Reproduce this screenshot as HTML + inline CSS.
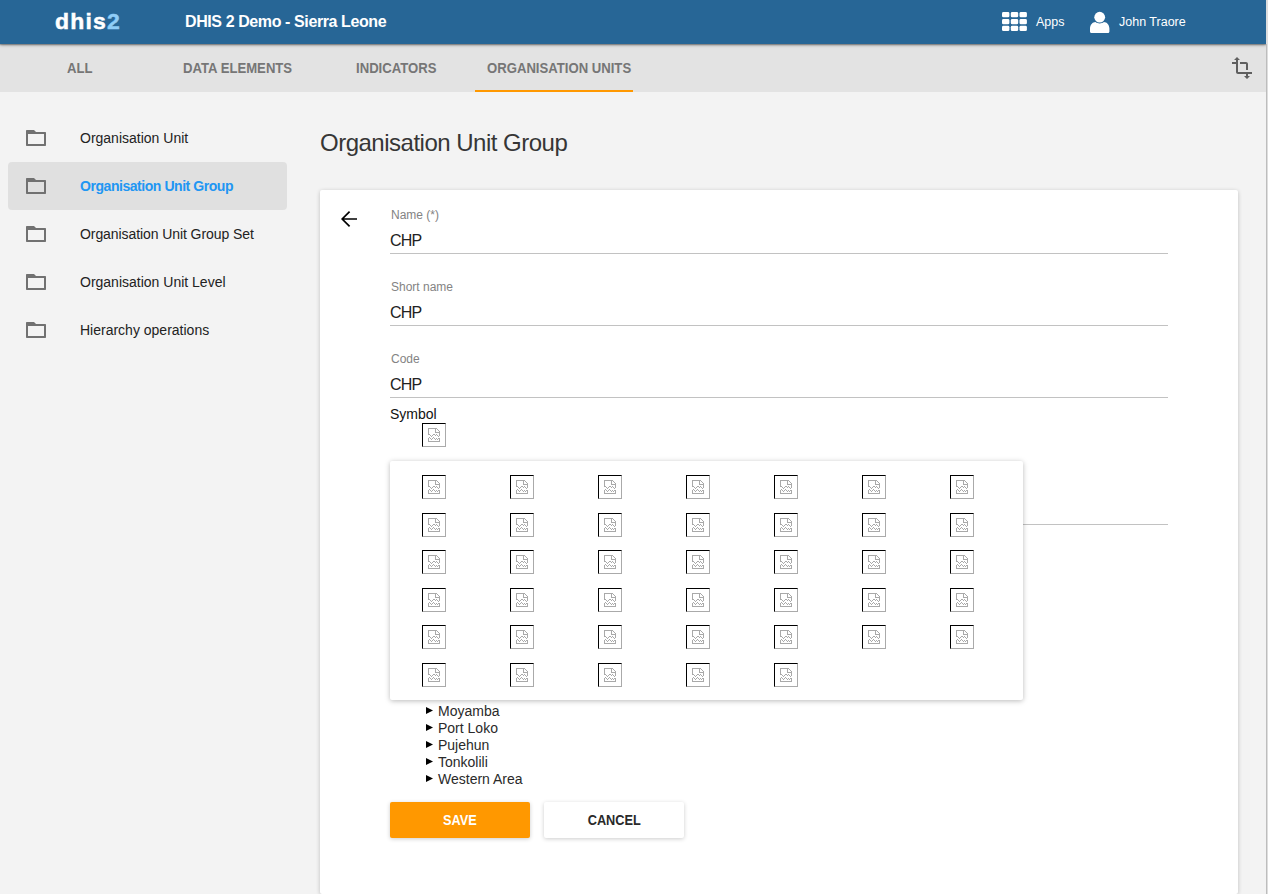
<!DOCTYPE html>
<html><head><meta charset="utf-8">
<style>
*{box-sizing:border-box;margin:0;padding:0}
html,body{width:1268px;height:894px;overflow:hidden;background:#f3f3f3;font-family:"Liberation Sans",sans-serif;position:relative}
.abs{position:absolute;white-space:nowrap}
#hdr{position:absolute;left:0;top:0;width:1266px;height:44px;background:#276696;box-shadow:0 1px 3px rgba(0,0,0,.4),0 1px 1px rgba(0,0,0,.2);z-index:5}
#tabs{position:absolute;left:0;top:44px;width:1266px;height:48px;background:#e3e3e3}
#rstrip{position:absolute;left:1266px;top:0;width:2px;height:894px;background:#dedede;z-index:6}
#rstrip:before{content:"";position:absolute;left:0;top:44px;width:1px;height:850px;background:#bdbdbd}
.tab{position:absolute;top:16px;font-size:15px;font-weight:bold;color:#767676;line-height:16px;transform:scaleX(0.875);transform-origin:0 0}
.side{position:absolute;left:80px;font-size:14px;color:#222;line-height:16px;white-space:nowrap}
.fold{position:absolute;left:24px;width:24px;height:24px}
.card{position:absolute;left:320px;top:190px;width:918px;height:704px;background:#fff;box-shadow:0 1px 4px rgba(0,0,0,.22);border-radius:2px}
.lbl{position:absolute;left:391px;font-size:12px;color:#838383;line-height:14px}
.val{position:absolute;left:390px;font-size:16px;color:#222;line-height:18px;letter-spacing:-0.8px}
.uline{position:absolute;left:390px;width:778px;height:1px;background:#c2c2c2}
.bi{position:absolute;width:24px;height:24px;border-top:1px solid #000;border-left:1px solid #000;border-right:1px solid #aaa;border-bottom:1px solid #aaa}
.bi svg{position:absolute;left:3px;top:2px;width:16px;height:18px}
.pop{position:absolute;left:390px;top:461px;width:633px;height:239px;background:#fff;border-radius:2px;box-shadow:0 1px 6px rgba(0,0,0,.16),0 1px 4px rgba(0,0,0,.12)}
.tree{position:absolute;left:438px;font-size:14px;color:#2a2a2a;line-height:17px}
.tri{position:absolute;left:426px;width:0;height:0;border-top:3.5px solid transparent;border-bottom:3.5px solid transparent;border-left:7.5px solid #000}
.btn{position:absolute;top:802px;width:140px;height:36px;border-radius:2px;font-size:14px;font-weight:bold;text-align:center;line-height:36px}.btn span{display:inline-block;transform:scaleX(0.85);font-size:15px}
</style></head><body>
<div id="hdr">
 <div class="abs" style="left:55px;top:7px;font-size:23px;font-weight:bold;color:#fff;line-height:30px;letter-spacing:1.2px;-webkit-text-stroke:0.5px currentColor;transform:scaleY(0.95);transform-origin:0 0">dhis<span style="color:#8fcdf7">2</span></div>
 <div class="abs" style="left:185px;top:13px;font-size:16px;font-weight:bold;color:#fff;line-height:18px;letter-spacing:-0.4px">DHIS 2 Demo - Sierra Leone</div>
 <svg class="abs" style="left:1001px;top:11px" width="27" height="22" viewBox="0 0 27 22">
  <g fill="#fff">
   <rect x="1" y="1" width="7.4" height="5.3" rx="1.4"/><rect x="9.8" y="1" width="7.4" height="5.3" rx="1.4"/><rect x="18.5" y="1" width="7.4" height="5.3" rx="1.4"/>
   <rect x="1" y="8" width="7.4" height="5.3" rx="1.4"/><rect x="9.8" y="8" width="7.4" height="5.3" rx="1.4"/><rect x="18.5" y="8" width="7.4" height="5.3" rx="1.4"/>
   <rect x="1" y="14.8" width="7.4" height="5.3" rx="1.4"/><rect x="9.8" y="14.8" width="7.4" height="5.3" rx="1.4"/><rect x="18.5" y="14.8" width="7.4" height="5.3" rx="1.4"/>
  </g>
 </svg>
 <div class="abs" style="left:1036px;top:15px;font-size:12.5px;color:#fff;line-height:14px">Apps</div>
 <svg class="abs" style="left:1089px;top:11px" width="22" height="23" viewBox="0 0 22 23">
  <g fill="#fff"><circle cx="10.7" cy="6.2" r="5.4"/><path d="M2.5 22C1.5 22 1 21.4 1 20.5v-3c0-3.6 2.6-6.5 5.5-6.5 1.2 1 2.6 1.4 4.2 1.4s3-.4 4.2-1.4c2.9 0 5.5 2.9 5.5 6.5v3c0 .9-.5 1.5-1.5 1.5z"/></g>
 </svg>
 <div class="abs" style="left:1119px;top:15px;font-size:12.5px;color:#fff;line-height:14px">John Traore</div>
</div>
<div id="tabs">
 <div class="tab" style="left:67px">ALL</div>
 <div class="tab" style="left:183px">DATA ELEMENTS</div>
 <div class="tab" style="left:356px">INDICATORS</div>
 <div class="tab" style="left:487px">ORGANISATION UNITS</div>
 <div style="position:absolute;left:475px;top:46px;width:158px;height:2px;background:#ff9800"></div>
 <svg class="abs" style="left:1230px;top:12px" width="24" height="24" viewBox="0 0 24 24"><path fill="#5f5f5f" d="M22 18v-2H8V4h2L7 1 4 4h2v2H2v2h4v8c0 1.1.9 2 2 2h8v2h-2l3 3 3-3h-2v-2h4zM10 8h6v6h2V8c0-1.1-.9-2-2-2h-6v2z"/></svg>
</div>
<div id="rstrip"></div>

<div style="position:absolute;left:8px;top:162px;width:279px;height:48px;background:#e0e0e0;border-radius:4px"></div>
<svg class="fold" style="top:126px" viewBox="0 0 24 24"><path fill="#717171" fill-rule="evenodd" d="M2 4.7Q2 4 2.7 4H10L12 6H21.3Q22 6 22 6.7V19.3Q22 20 21.3 20H2.7Q2 20 2 19.3ZM4 8V18H20V8Z"/></svg>
<svg class="fold" style="top:174px" viewBox="0 0 24 24"><path fill="#717171" fill-rule="evenodd" d="M2 4.7Q2 4 2.7 4H10L12 6H21.3Q22 6 22 6.7V19.3Q22 20 21.3 20H2.7Q2 20 2 19.3ZM4 8V18H20V8Z"/></svg>
<svg class="fold" style="top:222px" viewBox="0 0 24 24"><path fill="#717171" fill-rule="evenodd" d="M2 4.7Q2 4 2.7 4H10L12 6H21.3Q22 6 22 6.7V19.3Q22 20 21.3 20H2.7Q2 20 2 19.3ZM4 8V18H20V8Z"/></svg>
<svg class="fold" style="top:270px" viewBox="0 0 24 24"><path fill="#717171" fill-rule="evenodd" d="M2 4.7Q2 4 2.7 4H10L12 6H21.3Q22 6 22 6.7V19.3Q22 20 21.3 20H2.7Q2 20 2 19.3ZM4 8V18H20V8Z"/></svg>
<svg class="fold" style="top:318px" viewBox="0 0 24 24"><path fill="#717171" fill-rule="evenodd" d="M2 4.7Q2 4 2.7 4H10L12 6H21.3Q22 6 22 6.7V19.3Q22 20 21.3 20H2.7Q2 20 2 19.3ZM4 8V18H20V8Z"/></svg>
<div class="side" style="top:130px">Organisation Unit</div>
<div class="side" style="top:178px;color:#2196f3;font-weight:bold;letter-spacing:-0.45px">Organisation Unit Group</div>
<div class="side" style="top:226px;letter-spacing:-0.08px">Organisation Unit Group Set</div>
<div class="side" style="top:274px">Organisation Unit Level</div>
<div class="side" style="top:322px">Hierarchy operations</div>

<div class="abs" style="left:320px;top:129px;font-size:24px;color:#363636;line-height:28px;letter-spacing:-0.5px">Organisation Unit Group</div>

<div class="card"></div>
<svg class="abs" style="left:337px;top:207px" width="24" height="24" viewBox="0 0 24 24"><path fill="none" stroke="#000" stroke-width="1.7" d="M20 12H5.4M12.6 4.6L5.2 12l7.4 7.4"/></svg>

<div class="lbl" style="top:208px">Name (*)</div>
<div class="val" style="top:232px">CHP</div>
<div class="uline" style="top:253px"></div>
<div class="lbl" style="top:280px">Short name</div>
<div class="val" style="top:304px">CHP</div>
<div class="uline" style="top:325px"></div>
<div class="lbl" style="top:352px">Code</div>
<div class="val" style="top:376px">CHP</div>
<div class="uline" style="top:397px"></div>
<div class="abs" style="left:390px;top:406px;font-size:14px;color:#111;line-height:16px">Symbol</div>
<div class="bi" style="left:422px;top:423px"><svg viewBox="0 0 16 18" shape-rendering="crispEdges"><path fill="#a9a9a9" d="M2 2h9v1h-9zM2 3h1v1h-1zM9 3h1v1h-1zM11 3h1v1h-1zM2 4h1v1h-1zM9 4h1v1h-1zM12 4h1v1h-1zM2 5h1v1h-1zM9 5h1v1h-1zM13 5h1v1h-1zM2 6h1v1h-1zM9 6h5v1h-5zM2 7h1v1h-1zM13 7h1v1h-1zM2 8h2v1h-2zM7 8h2v1h-2zM10 8h1v1h-1zM13 8h1v1h-1zM4 9h1v1h-1zM6 9h1v1h-1zM9 9h1v1h-1zM11 9h1v1h-1zM13 9h1v1h-1zM5 10h1v1h-1zM12 10h1v1h-1zM3 11h1v1h-1zM7 11h1v1h-1zM2 12h1v1h-1zM4 12h1v1h-1zM6 12h1v1h-1zM8 12h1v1h-1zM10 12h1v1h-1zM12 12h2v1h-2zM2 13h1v1h-1zM5 13h1v1h-1zM9 13h1v1h-1zM11 13h1v1h-1zM13 13h1v1h-1zM2 14h1v1h-1zM13 14h1v1h-1zM2 15h12v1h-12z"/></svg></div>
<div class="uline" style="top:524px"></div>

<div class="pop"><div class="bi" style="left:32px;top:14px"><svg viewBox="0 0 16 18" shape-rendering="crispEdges"><path fill="#a9a9a9" d="M2 2h9v1h-9zM2 3h1v1h-1zM9 3h1v1h-1zM11 3h1v1h-1zM2 4h1v1h-1zM9 4h1v1h-1zM12 4h1v1h-1zM2 5h1v1h-1zM9 5h1v1h-1zM13 5h1v1h-1zM2 6h1v1h-1zM9 6h5v1h-5zM2 7h1v1h-1zM13 7h1v1h-1zM2 8h2v1h-2zM7 8h2v1h-2zM10 8h1v1h-1zM13 8h1v1h-1zM4 9h1v1h-1zM6 9h1v1h-1zM9 9h1v1h-1zM11 9h1v1h-1zM13 9h1v1h-1zM5 10h1v1h-1zM12 10h1v1h-1zM3 11h1v1h-1zM7 11h1v1h-1zM2 12h1v1h-1zM4 12h1v1h-1zM6 12h1v1h-1zM8 12h1v1h-1zM10 12h1v1h-1zM12 12h2v1h-2zM2 13h1v1h-1zM5 13h1v1h-1zM9 13h1v1h-1zM11 13h1v1h-1zM13 13h1v1h-1zM2 14h1v1h-1zM13 14h1v1h-1zM2 15h12v1h-12z"/></svg></div><div class="bi" style="left:120px;top:14px"><svg viewBox="0 0 16 18" shape-rendering="crispEdges"><path fill="#a9a9a9" d="M2 2h9v1h-9zM2 3h1v1h-1zM9 3h1v1h-1zM11 3h1v1h-1zM2 4h1v1h-1zM9 4h1v1h-1zM12 4h1v1h-1zM2 5h1v1h-1zM9 5h1v1h-1zM13 5h1v1h-1zM2 6h1v1h-1zM9 6h5v1h-5zM2 7h1v1h-1zM13 7h1v1h-1zM2 8h2v1h-2zM7 8h2v1h-2zM10 8h1v1h-1zM13 8h1v1h-1zM4 9h1v1h-1zM6 9h1v1h-1zM9 9h1v1h-1zM11 9h1v1h-1zM13 9h1v1h-1zM5 10h1v1h-1zM12 10h1v1h-1zM3 11h1v1h-1zM7 11h1v1h-1zM2 12h1v1h-1zM4 12h1v1h-1zM6 12h1v1h-1zM8 12h1v1h-1zM10 12h1v1h-1zM12 12h2v1h-2zM2 13h1v1h-1zM5 13h1v1h-1zM9 13h1v1h-1zM11 13h1v1h-1zM13 13h1v1h-1zM2 14h1v1h-1zM13 14h1v1h-1zM2 15h12v1h-12z"/></svg></div><div class="bi" style="left:208px;top:14px"><svg viewBox="0 0 16 18" shape-rendering="crispEdges"><path fill="#a9a9a9" d="M2 2h9v1h-9zM2 3h1v1h-1zM9 3h1v1h-1zM11 3h1v1h-1zM2 4h1v1h-1zM9 4h1v1h-1zM12 4h1v1h-1zM2 5h1v1h-1zM9 5h1v1h-1zM13 5h1v1h-1zM2 6h1v1h-1zM9 6h5v1h-5zM2 7h1v1h-1zM13 7h1v1h-1zM2 8h2v1h-2zM7 8h2v1h-2zM10 8h1v1h-1zM13 8h1v1h-1zM4 9h1v1h-1zM6 9h1v1h-1zM9 9h1v1h-1zM11 9h1v1h-1zM13 9h1v1h-1zM5 10h1v1h-1zM12 10h1v1h-1zM3 11h1v1h-1zM7 11h1v1h-1zM2 12h1v1h-1zM4 12h1v1h-1zM6 12h1v1h-1zM8 12h1v1h-1zM10 12h1v1h-1zM12 12h2v1h-2zM2 13h1v1h-1zM5 13h1v1h-1zM9 13h1v1h-1zM11 13h1v1h-1zM13 13h1v1h-1zM2 14h1v1h-1zM13 14h1v1h-1zM2 15h12v1h-12z"/></svg></div><div class="bi" style="left:296px;top:14px"><svg viewBox="0 0 16 18" shape-rendering="crispEdges"><path fill="#a9a9a9" d="M2 2h9v1h-9zM2 3h1v1h-1zM9 3h1v1h-1zM11 3h1v1h-1zM2 4h1v1h-1zM9 4h1v1h-1zM12 4h1v1h-1zM2 5h1v1h-1zM9 5h1v1h-1zM13 5h1v1h-1zM2 6h1v1h-1zM9 6h5v1h-5zM2 7h1v1h-1zM13 7h1v1h-1zM2 8h2v1h-2zM7 8h2v1h-2zM10 8h1v1h-1zM13 8h1v1h-1zM4 9h1v1h-1zM6 9h1v1h-1zM9 9h1v1h-1zM11 9h1v1h-1zM13 9h1v1h-1zM5 10h1v1h-1zM12 10h1v1h-1zM3 11h1v1h-1zM7 11h1v1h-1zM2 12h1v1h-1zM4 12h1v1h-1zM6 12h1v1h-1zM8 12h1v1h-1zM10 12h1v1h-1zM12 12h2v1h-2zM2 13h1v1h-1zM5 13h1v1h-1zM9 13h1v1h-1zM11 13h1v1h-1zM13 13h1v1h-1zM2 14h1v1h-1zM13 14h1v1h-1zM2 15h12v1h-12z"/></svg></div><div class="bi" style="left:384px;top:14px"><svg viewBox="0 0 16 18" shape-rendering="crispEdges"><path fill="#a9a9a9" d="M2 2h9v1h-9zM2 3h1v1h-1zM9 3h1v1h-1zM11 3h1v1h-1zM2 4h1v1h-1zM9 4h1v1h-1zM12 4h1v1h-1zM2 5h1v1h-1zM9 5h1v1h-1zM13 5h1v1h-1zM2 6h1v1h-1zM9 6h5v1h-5zM2 7h1v1h-1zM13 7h1v1h-1zM2 8h2v1h-2zM7 8h2v1h-2zM10 8h1v1h-1zM13 8h1v1h-1zM4 9h1v1h-1zM6 9h1v1h-1zM9 9h1v1h-1zM11 9h1v1h-1zM13 9h1v1h-1zM5 10h1v1h-1zM12 10h1v1h-1zM3 11h1v1h-1zM7 11h1v1h-1zM2 12h1v1h-1zM4 12h1v1h-1zM6 12h1v1h-1zM8 12h1v1h-1zM10 12h1v1h-1zM12 12h2v1h-2zM2 13h1v1h-1zM5 13h1v1h-1zM9 13h1v1h-1zM11 13h1v1h-1zM13 13h1v1h-1zM2 14h1v1h-1zM13 14h1v1h-1zM2 15h12v1h-12z"/></svg></div><div class="bi" style="left:472px;top:14px"><svg viewBox="0 0 16 18" shape-rendering="crispEdges"><path fill="#a9a9a9" d="M2 2h9v1h-9zM2 3h1v1h-1zM9 3h1v1h-1zM11 3h1v1h-1zM2 4h1v1h-1zM9 4h1v1h-1zM12 4h1v1h-1zM2 5h1v1h-1zM9 5h1v1h-1zM13 5h1v1h-1zM2 6h1v1h-1zM9 6h5v1h-5zM2 7h1v1h-1zM13 7h1v1h-1zM2 8h2v1h-2zM7 8h2v1h-2zM10 8h1v1h-1zM13 8h1v1h-1zM4 9h1v1h-1zM6 9h1v1h-1zM9 9h1v1h-1zM11 9h1v1h-1zM13 9h1v1h-1zM5 10h1v1h-1zM12 10h1v1h-1zM3 11h1v1h-1zM7 11h1v1h-1zM2 12h1v1h-1zM4 12h1v1h-1zM6 12h1v1h-1zM8 12h1v1h-1zM10 12h1v1h-1zM12 12h2v1h-2zM2 13h1v1h-1zM5 13h1v1h-1zM9 13h1v1h-1zM11 13h1v1h-1zM13 13h1v1h-1zM2 14h1v1h-1zM13 14h1v1h-1zM2 15h12v1h-12z"/></svg></div><div class="bi" style="left:560px;top:14px"><svg viewBox="0 0 16 18" shape-rendering="crispEdges"><path fill="#a9a9a9" d="M2 2h9v1h-9zM2 3h1v1h-1zM9 3h1v1h-1zM11 3h1v1h-1zM2 4h1v1h-1zM9 4h1v1h-1zM12 4h1v1h-1zM2 5h1v1h-1zM9 5h1v1h-1zM13 5h1v1h-1zM2 6h1v1h-1zM9 6h5v1h-5zM2 7h1v1h-1zM13 7h1v1h-1zM2 8h2v1h-2zM7 8h2v1h-2zM10 8h1v1h-1zM13 8h1v1h-1zM4 9h1v1h-1zM6 9h1v1h-1zM9 9h1v1h-1zM11 9h1v1h-1zM13 9h1v1h-1zM5 10h1v1h-1zM12 10h1v1h-1zM3 11h1v1h-1zM7 11h1v1h-1zM2 12h1v1h-1zM4 12h1v1h-1zM6 12h1v1h-1zM8 12h1v1h-1zM10 12h1v1h-1zM12 12h2v1h-2zM2 13h1v1h-1zM5 13h1v1h-1zM9 13h1v1h-1zM11 13h1v1h-1zM13 13h1v1h-1zM2 14h1v1h-1zM13 14h1v1h-1zM2 15h12v1h-12z"/></svg></div><div class="bi" style="left:32px;top:52px"><svg viewBox="0 0 16 18" shape-rendering="crispEdges"><path fill="#a9a9a9" d="M2 2h9v1h-9zM2 3h1v1h-1zM9 3h1v1h-1zM11 3h1v1h-1zM2 4h1v1h-1zM9 4h1v1h-1zM12 4h1v1h-1zM2 5h1v1h-1zM9 5h1v1h-1zM13 5h1v1h-1zM2 6h1v1h-1zM9 6h5v1h-5zM2 7h1v1h-1zM13 7h1v1h-1zM2 8h2v1h-2zM7 8h2v1h-2zM10 8h1v1h-1zM13 8h1v1h-1zM4 9h1v1h-1zM6 9h1v1h-1zM9 9h1v1h-1zM11 9h1v1h-1zM13 9h1v1h-1zM5 10h1v1h-1zM12 10h1v1h-1zM3 11h1v1h-1zM7 11h1v1h-1zM2 12h1v1h-1zM4 12h1v1h-1zM6 12h1v1h-1zM8 12h1v1h-1zM10 12h1v1h-1zM12 12h2v1h-2zM2 13h1v1h-1zM5 13h1v1h-1zM9 13h1v1h-1zM11 13h1v1h-1zM13 13h1v1h-1zM2 14h1v1h-1zM13 14h1v1h-1zM2 15h12v1h-12z"/></svg></div><div class="bi" style="left:120px;top:52px"><svg viewBox="0 0 16 18" shape-rendering="crispEdges"><path fill="#a9a9a9" d="M2 2h9v1h-9zM2 3h1v1h-1zM9 3h1v1h-1zM11 3h1v1h-1zM2 4h1v1h-1zM9 4h1v1h-1zM12 4h1v1h-1zM2 5h1v1h-1zM9 5h1v1h-1zM13 5h1v1h-1zM2 6h1v1h-1zM9 6h5v1h-5zM2 7h1v1h-1zM13 7h1v1h-1zM2 8h2v1h-2zM7 8h2v1h-2zM10 8h1v1h-1zM13 8h1v1h-1zM4 9h1v1h-1zM6 9h1v1h-1zM9 9h1v1h-1zM11 9h1v1h-1zM13 9h1v1h-1zM5 10h1v1h-1zM12 10h1v1h-1zM3 11h1v1h-1zM7 11h1v1h-1zM2 12h1v1h-1zM4 12h1v1h-1zM6 12h1v1h-1zM8 12h1v1h-1zM10 12h1v1h-1zM12 12h2v1h-2zM2 13h1v1h-1zM5 13h1v1h-1zM9 13h1v1h-1zM11 13h1v1h-1zM13 13h1v1h-1zM2 14h1v1h-1zM13 14h1v1h-1zM2 15h12v1h-12z"/></svg></div><div class="bi" style="left:208px;top:52px"><svg viewBox="0 0 16 18" shape-rendering="crispEdges"><path fill="#a9a9a9" d="M2 2h9v1h-9zM2 3h1v1h-1zM9 3h1v1h-1zM11 3h1v1h-1zM2 4h1v1h-1zM9 4h1v1h-1zM12 4h1v1h-1zM2 5h1v1h-1zM9 5h1v1h-1zM13 5h1v1h-1zM2 6h1v1h-1zM9 6h5v1h-5zM2 7h1v1h-1zM13 7h1v1h-1zM2 8h2v1h-2zM7 8h2v1h-2zM10 8h1v1h-1zM13 8h1v1h-1zM4 9h1v1h-1zM6 9h1v1h-1zM9 9h1v1h-1zM11 9h1v1h-1zM13 9h1v1h-1zM5 10h1v1h-1zM12 10h1v1h-1zM3 11h1v1h-1zM7 11h1v1h-1zM2 12h1v1h-1zM4 12h1v1h-1zM6 12h1v1h-1zM8 12h1v1h-1zM10 12h1v1h-1zM12 12h2v1h-2zM2 13h1v1h-1zM5 13h1v1h-1zM9 13h1v1h-1zM11 13h1v1h-1zM13 13h1v1h-1zM2 14h1v1h-1zM13 14h1v1h-1zM2 15h12v1h-12z"/></svg></div><div class="bi" style="left:296px;top:52px"><svg viewBox="0 0 16 18" shape-rendering="crispEdges"><path fill="#a9a9a9" d="M2 2h9v1h-9zM2 3h1v1h-1zM9 3h1v1h-1zM11 3h1v1h-1zM2 4h1v1h-1zM9 4h1v1h-1zM12 4h1v1h-1zM2 5h1v1h-1zM9 5h1v1h-1zM13 5h1v1h-1zM2 6h1v1h-1zM9 6h5v1h-5zM2 7h1v1h-1zM13 7h1v1h-1zM2 8h2v1h-2zM7 8h2v1h-2zM10 8h1v1h-1zM13 8h1v1h-1zM4 9h1v1h-1zM6 9h1v1h-1zM9 9h1v1h-1zM11 9h1v1h-1zM13 9h1v1h-1zM5 10h1v1h-1zM12 10h1v1h-1zM3 11h1v1h-1zM7 11h1v1h-1zM2 12h1v1h-1zM4 12h1v1h-1zM6 12h1v1h-1zM8 12h1v1h-1zM10 12h1v1h-1zM12 12h2v1h-2zM2 13h1v1h-1zM5 13h1v1h-1zM9 13h1v1h-1zM11 13h1v1h-1zM13 13h1v1h-1zM2 14h1v1h-1zM13 14h1v1h-1zM2 15h12v1h-12z"/></svg></div><div class="bi" style="left:384px;top:52px"><svg viewBox="0 0 16 18" shape-rendering="crispEdges"><path fill="#a9a9a9" d="M2 2h9v1h-9zM2 3h1v1h-1zM9 3h1v1h-1zM11 3h1v1h-1zM2 4h1v1h-1zM9 4h1v1h-1zM12 4h1v1h-1zM2 5h1v1h-1zM9 5h1v1h-1zM13 5h1v1h-1zM2 6h1v1h-1zM9 6h5v1h-5zM2 7h1v1h-1zM13 7h1v1h-1zM2 8h2v1h-2zM7 8h2v1h-2zM10 8h1v1h-1zM13 8h1v1h-1zM4 9h1v1h-1zM6 9h1v1h-1zM9 9h1v1h-1zM11 9h1v1h-1zM13 9h1v1h-1zM5 10h1v1h-1zM12 10h1v1h-1zM3 11h1v1h-1zM7 11h1v1h-1zM2 12h1v1h-1zM4 12h1v1h-1zM6 12h1v1h-1zM8 12h1v1h-1zM10 12h1v1h-1zM12 12h2v1h-2zM2 13h1v1h-1zM5 13h1v1h-1zM9 13h1v1h-1zM11 13h1v1h-1zM13 13h1v1h-1zM2 14h1v1h-1zM13 14h1v1h-1zM2 15h12v1h-12z"/></svg></div><div class="bi" style="left:472px;top:52px"><svg viewBox="0 0 16 18" shape-rendering="crispEdges"><path fill="#a9a9a9" d="M2 2h9v1h-9zM2 3h1v1h-1zM9 3h1v1h-1zM11 3h1v1h-1zM2 4h1v1h-1zM9 4h1v1h-1zM12 4h1v1h-1zM2 5h1v1h-1zM9 5h1v1h-1zM13 5h1v1h-1zM2 6h1v1h-1zM9 6h5v1h-5zM2 7h1v1h-1zM13 7h1v1h-1zM2 8h2v1h-2zM7 8h2v1h-2zM10 8h1v1h-1zM13 8h1v1h-1zM4 9h1v1h-1zM6 9h1v1h-1zM9 9h1v1h-1zM11 9h1v1h-1zM13 9h1v1h-1zM5 10h1v1h-1zM12 10h1v1h-1zM3 11h1v1h-1zM7 11h1v1h-1zM2 12h1v1h-1zM4 12h1v1h-1zM6 12h1v1h-1zM8 12h1v1h-1zM10 12h1v1h-1zM12 12h2v1h-2zM2 13h1v1h-1zM5 13h1v1h-1zM9 13h1v1h-1zM11 13h1v1h-1zM13 13h1v1h-1zM2 14h1v1h-1zM13 14h1v1h-1zM2 15h12v1h-12z"/></svg></div><div class="bi" style="left:560px;top:52px"><svg viewBox="0 0 16 18" shape-rendering="crispEdges"><path fill="#a9a9a9" d="M2 2h9v1h-9zM2 3h1v1h-1zM9 3h1v1h-1zM11 3h1v1h-1zM2 4h1v1h-1zM9 4h1v1h-1zM12 4h1v1h-1zM2 5h1v1h-1zM9 5h1v1h-1zM13 5h1v1h-1zM2 6h1v1h-1zM9 6h5v1h-5zM2 7h1v1h-1zM13 7h1v1h-1zM2 8h2v1h-2zM7 8h2v1h-2zM10 8h1v1h-1zM13 8h1v1h-1zM4 9h1v1h-1zM6 9h1v1h-1zM9 9h1v1h-1zM11 9h1v1h-1zM13 9h1v1h-1zM5 10h1v1h-1zM12 10h1v1h-1zM3 11h1v1h-1zM7 11h1v1h-1zM2 12h1v1h-1zM4 12h1v1h-1zM6 12h1v1h-1zM8 12h1v1h-1zM10 12h1v1h-1zM12 12h2v1h-2zM2 13h1v1h-1zM5 13h1v1h-1zM9 13h1v1h-1zM11 13h1v1h-1zM13 13h1v1h-1zM2 14h1v1h-1zM13 14h1v1h-1zM2 15h12v1h-12z"/></svg></div><div class="bi" style="left:32px;top:89px"><svg viewBox="0 0 16 18" shape-rendering="crispEdges"><path fill="#a9a9a9" d="M2 2h9v1h-9zM2 3h1v1h-1zM9 3h1v1h-1zM11 3h1v1h-1zM2 4h1v1h-1zM9 4h1v1h-1zM12 4h1v1h-1zM2 5h1v1h-1zM9 5h1v1h-1zM13 5h1v1h-1zM2 6h1v1h-1zM9 6h5v1h-5zM2 7h1v1h-1zM13 7h1v1h-1zM2 8h2v1h-2zM7 8h2v1h-2zM10 8h1v1h-1zM13 8h1v1h-1zM4 9h1v1h-1zM6 9h1v1h-1zM9 9h1v1h-1zM11 9h1v1h-1zM13 9h1v1h-1zM5 10h1v1h-1zM12 10h1v1h-1zM3 11h1v1h-1zM7 11h1v1h-1zM2 12h1v1h-1zM4 12h1v1h-1zM6 12h1v1h-1zM8 12h1v1h-1zM10 12h1v1h-1zM12 12h2v1h-2zM2 13h1v1h-1zM5 13h1v1h-1zM9 13h1v1h-1zM11 13h1v1h-1zM13 13h1v1h-1zM2 14h1v1h-1zM13 14h1v1h-1zM2 15h12v1h-12z"/></svg></div><div class="bi" style="left:120px;top:89px"><svg viewBox="0 0 16 18" shape-rendering="crispEdges"><path fill="#a9a9a9" d="M2 2h9v1h-9zM2 3h1v1h-1zM9 3h1v1h-1zM11 3h1v1h-1zM2 4h1v1h-1zM9 4h1v1h-1zM12 4h1v1h-1zM2 5h1v1h-1zM9 5h1v1h-1zM13 5h1v1h-1zM2 6h1v1h-1zM9 6h5v1h-5zM2 7h1v1h-1zM13 7h1v1h-1zM2 8h2v1h-2zM7 8h2v1h-2zM10 8h1v1h-1zM13 8h1v1h-1zM4 9h1v1h-1zM6 9h1v1h-1zM9 9h1v1h-1zM11 9h1v1h-1zM13 9h1v1h-1zM5 10h1v1h-1zM12 10h1v1h-1zM3 11h1v1h-1zM7 11h1v1h-1zM2 12h1v1h-1zM4 12h1v1h-1zM6 12h1v1h-1zM8 12h1v1h-1zM10 12h1v1h-1zM12 12h2v1h-2zM2 13h1v1h-1zM5 13h1v1h-1zM9 13h1v1h-1zM11 13h1v1h-1zM13 13h1v1h-1zM2 14h1v1h-1zM13 14h1v1h-1zM2 15h12v1h-12z"/></svg></div><div class="bi" style="left:208px;top:89px"><svg viewBox="0 0 16 18" shape-rendering="crispEdges"><path fill="#a9a9a9" d="M2 2h9v1h-9zM2 3h1v1h-1zM9 3h1v1h-1zM11 3h1v1h-1zM2 4h1v1h-1zM9 4h1v1h-1zM12 4h1v1h-1zM2 5h1v1h-1zM9 5h1v1h-1zM13 5h1v1h-1zM2 6h1v1h-1zM9 6h5v1h-5zM2 7h1v1h-1zM13 7h1v1h-1zM2 8h2v1h-2zM7 8h2v1h-2zM10 8h1v1h-1zM13 8h1v1h-1zM4 9h1v1h-1zM6 9h1v1h-1zM9 9h1v1h-1zM11 9h1v1h-1zM13 9h1v1h-1zM5 10h1v1h-1zM12 10h1v1h-1zM3 11h1v1h-1zM7 11h1v1h-1zM2 12h1v1h-1zM4 12h1v1h-1zM6 12h1v1h-1zM8 12h1v1h-1zM10 12h1v1h-1zM12 12h2v1h-2zM2 13h1v1h-1zM5 13h1v1h-1zM9 13h1v1h-1zM11 13h1v1h-1zM13 13h1v1h-1zM2 14h1v1h-1zM13 14h1v1h-1zM2 15h12v1h-12z"/></svg></div><div class="bi" style="left:296px;top:89px"><svg viewBox="0 0 16 18" shape-rendering="crispEdges"><path fill="#a9a9a9" d="M2 2h9v1h-9zM2 3h1v1h-1zM9 3h1v1h-1zM11 3h1v1h-1zM2 4h1v1h-1zM9 4h1v1h-1zM12 4h1v1h-1zM2 5h1v1h-1zM9 5h1v1h-1zM13 5h1v1h-1zM2 6h1v1h-1zM9 6h5v1h-5zM2 7h1v1h-1zM13 7h1v1h-1zM2 8h2v1h-2zM7 8h2v1h-2zM10 8h1v1h-1zM13 8h1v1h-1zM4 9h1v1h-1zM6 9h1v1h-1zM9 9h1v1h-1zM11 9h1v1h-1zM13 9h1v1h-1zM5 10h1v1h-1zM12 10h1v1h-1zM3 11h1v1h-1zM7 11h1v1h-1zM2 12h1v1h-1zM4 12h1v1h-1zM6 12h1v1h-1zM8 12h1v1h-1zM10 12h1v1h-1zM12 12h2v1h-2zM2 13h1v1h-1zM5 13h1v1h-1zM9 13h1v1h-1zM11 13h1v1h-1zM13 13h1v1h-1zM2 14h1v1h-1zM13 14h1v1h-1zM2 15h12v1h-12z"/></svg></div><div class="bi" style="left:384px;top:89px"><svg viewBox="0 0 16 18" shape-rendering="crispEdges"><path fill="#a9a9a9" d="M2 2h9v1h-9zM2 3h1v1h-1zM9 3h1v1h-1zM11 3h1v1h-1zM2 4h1v1h-1zM9 4h1v1h-1zM12 4h1v1h-1zM2 5h1v1h-1zM9 5h1v1h-1zM13 5h1v1h-1zM2 6h1v1h-1zM9 6h5v1h-5zM2 7h1v1h-1zM13 7h1v1h-1zM2 8h2v1h-2zM7 8h2v1h-2zM10 8h1v1h-1zM13 8h1v1h-1zM4 9h1v1h-1zM6 9h1v1h-1zM9 9h1v1h-1zM11 9h1v1h-1zM13 9h1v1h-1zM5 10h1v1h-1zM12 10h1v1h-1zM3 11h1v1h-1zM7 11h1v1h-1zM2 12h1v1h-1zM4 12h1v1h-1zM6 12h1v1h-1zM8 12h1v1h-1zM10 12h1v1h-1zM12 12h2v1h-2zM2 13h1v1h-1zM5 13h1v1h-1zM9 13h1v1h-1zM11 13h1v1h-1zM13 13h1v1h-1zM2 14h1v1h-1zM13 14h1v1h-1zM2 15h12v1h-12z"/></svg></div><div class="bi" style="left:472px;top:89px"><svg viewBox="0 0 16 18" shape-rendering="crispEdges"><path fill="#a9a9a9" d="M2 2h9v1h-9zM2 3h1v1h-1zM9 3h1v1h-1zM11 3h1v1h-1zM2 4h1v1h-1zM9 4h1v1h-1zM12 4h1v1h-1zM2 5h1v1h-1zM9 5h1v1h-1zM13 5h1v1h-1zM2 6h1v1h-1zM9 6h5v1h-5zM2 7h1v1h-1zM13 7h1v1h-1zM2 8h2v1h-2zM7 8h2v1h-2zM10 8h1v1h-1zM13 8h1v1h-1zM4 9h1v1h-1zM6 9h1v1h-1zM9 9h1v1h-1zM11 9h1v1h-1zM13 9h1v1h-1zM5 10h1v1h-1zM12 10h1v1h-1zM3 11h1v1h-1zM7 11h1v1h-1zM2 12h1v1h-1zM4 12h1v1h-1zM6 12h1v1h-1zM8 12h1v1h-1zM10 12h1v1h-1zM12 12h2v1h-2zM2 13h1v1h-1zM5 13h1v1h-1zM9 13h1v1h-1zM11 13h1v1h-1zM13 13h1v1h-1zM2 14h1v1h-1zM13 14h1v1h-1zM2 15h12v1h-12z"/></svg></div><div class="bi" style="left:560px;top:89px"><svg viewBox="0 0 16 18" shape-rendering="crispEdges"><path fill="#a9a9a9" d="M2 2h9v1h-9zM2 3h1v1h-1zM9 3h1v1h-1zM11 3h1v1h-1zM2 4h1v1h-1zM9 4h1v1h-1zM12 4h1v1h-1zM2 5h1v1h-1zM9 5h1v1h-1zM13 5h1v1h-1zM2 6h1v1h-1zM9 6h5v1h-5zM2 7h1v1h-1zM13 7h1v1h-1zM2 8h2v1h-2zM7 8h2v1h-2zM10 8h1v1h-1zM13 8h1v1h-1zM4 9h1v1h-1zM6 9h1v1h-1zM9 9h1v1h-1zM11 9h1v1h-1zM13 9h1v1h-1zM5 10h1v1h-1zM12 10h1v1h-1zM3 11h1v1h-1zM7 11h1v1h-1zM2 12h1v1h-1zM4 12h1v1h-1zM6 12h1v1h-1zM8 12h1v1h-1zM10 12h1v1h-1zM12 12h2v1h-2zM2 13h1v1h-1zM5 13h1v1h-1zM9 13h1v1h-1zM11 13h1v1h-1zM13 13h1v1h-1zM2 14h1v1h-1zM13 14h1v1h-1zM2 15h12v1h-12z"/></svg></div><div class="bi" style="left:32px;top:127px"><svg viewBox="0 0 16 18" shape-rendering="crispEdges"><path fill="#a9a9a9" d="M2 2h9v1h-9zM2 3h1v1h-1zM9 3h1v1h-1zM11 3h1v1h-1zM2 4h1v1h-1zM9 4h1v1h-1zM12 4h1v1h-1zM2 5h1v1h-1zM9 5h1v1h-1zM13 5h1v1h-1zM2 6h1v1h-1zM9 6h5v1h-5zM2 7h1v1h-1zM13 7h1v1h-1zM2 8h2v1h-2zM7 8h2v1h-2zM10 8h1v1h-1zM13 8h1v1h-1zM4 9h1v1h-1zM6 9h1v1h-1zM9 9h1v1h-1zM11 9h1v1h-1zM13 9h1v1h-1zM5 10h1v1h-1zM12 10h1v1h-1zM3 11h1v1h-1zM7 11h1v1h-1zM2 12h1v1h-1zM4 12h1v1h-1zM6 12h1v1h-1zM8 12h1v1h-1zM10 12h1v1h-1zM12 12h2v1h-2zM2 13h1v1h-1zM5 13h1v1h-1zM9 13h1v1h-1zM11 13h1v1h-1zM13 13h1v1h-1zM2 14h1v1h-1zM13 14h1v1h-1zM2 15h12v1h-12z"/></svg></div><div class="bi" style="left:120px;top:127px"><svg viewBox="0 0 16 18" shape-rendering="crispEdges"><path fill="#a9a9a9" d="M2 2h9v1h-9zM2 3h1v1h-1zM9 3h1v1h-1zM11 3h1v1h-1zM2 4h1v1h-1zM9 4h1v1h-1zM12 4h1v1h-1zM2 5h1v1h-1zM9 5h1v1h-1zM13 5h1v1h-1zM2 6h1v1h-1zM9 6h5v1h-5zM2 7h1v1h-1zM13 7h1v1h-1zM2 8h2v1h-2zM7 8h2v1h-2zM10 8h1v1h-1zM13 8h1v1h-1zM4 9h1v1h-1zM6 9h1v1h-1zM9 9h1v1h-1zM11 9h1v1h-1zM13 9h1v1h-1zM5 10h1v1h-1zM12 10h1v1h-1zM3 11h1v1h-1zM7 11h1v1h-1zM2 12h1v1h-1zM4 12h1v1h-1zM6 12h1v1h-1zM8 12h1v1h-1zM10 12h1v1h-1zM12 12h2v1h-2zM2 13h1v1h-1zM5 13h1v1h-1zM9 13h1v1h-1zM11 13h1v1h-1zM13 13h1v1h-1zM2 14h1v1h-1zM13 14h1v1h-1zM2 15h12v1h-12z"/></svg></div><div class="bi" style="left:208px;top:127px"><svg viewBox="0 0 16 18" shape-rendering="crispEdges"><path fill="#a9a9a9" d="M2 2h9v1h-9zM2 3h1v1h-1zM9 3h1v1h-1zM11 3h1v1h-1zM2 4h1v1h-1zM9 4h1v1h-1zM12 4h1v1h-1zM2 5h1v1h-1zM9 5h1v1h-1zM13 5h1v1h-1zM2 6h1v1h-1zM9 6h5v1h-5zM2 7h1v1h-1zM13 7h1v1h-1zM2 8h2v1h-2zM7 8h2v1h-2zM10 8h1v1h-1zM13 8h1v1h-1zM4 9h1v1h-1zM6 9h1v1h-1zM9 9h1v1h-1zM11 9h1v1h-1zM13 9h1v1h-1zM5 10h1v1h-1zM12 10h1v1h-1zM3 11h1v1h-1zM7 11h1v1h-1zM2 12h1v1h-1zM4 12h1v1h-1zM6 12h1v1h-1zM8 12h1v1h-1zM10 12h1v1h-1zM12 12h2v1h-2zM2 13h1v1h-1zM5 13h1v1h-1zM9 13h1v1h-1zM11 13h1v1h-1zM13 13h1v1h-1zM2 14h1v1h-1zM13 14h1v1h-1zM2 15h12v1h-12z"/></svg></div><div class="bi" style="left:296px;top:127px"><svg viewBox="0 0 16 18" shape-rendering="crispEdges"><path fill="#a9a9a9" d="M2 2h9v1h-9zM2 3h1v1h-1zM9 3h1v1h-1zM11 3h1v1h-1zM2 4h1v1h-1zM9 4h1v1h-1zM12 4h1v1h-1zM2 5h1v1h-1zM9 5h1v1h-1zM13 5h1v1h-1zM2 6h1v1h-1zM9 6h5v1h-5zM2 7h1v1h-1zM13 7h1v1h-1zM2 8h2v1h-2zM7 8h2v1h-2zM10 8h1v1h-1zM13 8h1v1h-1zM4 9h1v1h-1zM6 9h1v1h-1zM9 9h1v1h-1zM11 9h1v1h-1zM13 9h1v1h-1zM5 10h1v1h-1zM12 10h1v1h-1zM3 11h1v1h-1zM7 11h1v1h-1zM2 12h1v1h-1zM4 12h1v1h-1zM6 12h1v1h-1zM8 12h1v1h-1zM10 12h1v1h-1zM12 12h2v1h-2zM2 13h1v1h-1zM5 13h1v1h-1zM9 13h1v1h-1zM11 13h1v1h-1zM13 13h1v1h-1zM2 14h1v1h-1zM13 14h1v1h-1zM2 15h12v1h-12z"/></svg></div><div class="bi" style="left:384px;top:127px"><svg viewBox="0 0 16 18" shape-rendering="crispEdges"><path fill="#a9a9a9" d="M2 2h9v1h-9zM2 3h1v1h-1zM9 3h1v1h-1zM11 3h1v1h-1zM2 4h1v1h-1zM9 4h1v1h-1zM12 4h1v1h-1zM2 5h1v1h-1zM9 5h1v1h-1zM13 5h1v1h-1zM2 6h1v1h-1zM9 6h5v1h-5zM2 7h1v1h-1zM13 7h1v1h-1zM2 8h2v1h-2zM7 8h2v1h-2zM10 8h1v1h-1zM13 8h1v1h-1zM4 9h1v1h-1zM6 9h1v1h-1zM9 9h1v1h-1zM11 9h1v1h-1zM13 9h1v1h-1zM5 10h1v1h-1zM12 10h1v1h-1zM3 11h1v1h-1zM7 11h1v1h-1zM2 12h1v1h-1zM4 12h1v1h-1zM6 12h1v1h-1zM8 12h1v1h-1zM10 12h1v1h-1zM12 12h2v1h-2zM2 13h1v1h-1zM5 13h1v1h-1zM9 13h1v1h-1zM11 13h1v1h-1zM13 13h1v1h-1zM2 14h1v1h-1zM13 14h1v1h-1zM2 15h12v1h-12z"/></svg></div><div class="bi" style="left:472px;top:127px"><svg viewBox="0 0 16 18" shape-rendering="crispEdges"><path fill="#a9a9a9" d="M2 2h9v1h-9zM2 3h1v1h-1zM9 3h1v1h-1zM11 3h1v1h-1zM2 4h1v1h-1zM9 4h1v1h-1zM12 4h1v1h-1zM2 5h1v1h-1zM9 5h1v1h-1zM13 5h1v1h-1zM2 6h1v1h-1zM9 6h5v1h-5zM2 7h1v1h-1zM13 7h1v1h-1zM2 8h2v1h-2zM7 8h2v1h-2zM10 8h1v1h-1zM13 8h1v1h-1zM4 9h1v1h-1zM6 9h1v1h-1zM9 9h1v1h-1zM11 9h1v1h-1zM13 9h1v1h-1zM5 10h1v1h-1zM12 10h1v1h-1zM3 11h1v1h-1zM7 11h1v1h-1zM2 12h1v1h-1zM4 12h1v1h-1zM6 12h1v1h-1zM8 12h1v1h-1zM10 12h1v1h-1zM12 12h2v1h-2zM2 13h1v1h-1zM5 13h1v1h-1zM9 13h1v1h-1zM11 13h1v1h-1zM13 13h1v1h-1zM2 14h1v1h-1zM13 14h1v1h-1zM2 15h12v1h-12z"/></svg></div><div class="bi" style="left:560px;top:127px"><svg viewBox="0 0 16 18" shape-rendering="crispEdges"><path fill="#a9a9a9" d="M2 2h9v1h-9zM2 3h1v1h-1zM9 3h1v1h-1zM11 3h1v1h-1zM2 4h1v1h-1zM9 4h1v1h-1zM12 4h1v1h-1zM2 5h1v1h-1zM9 5h1v1h-1zM13 5h1v1h-1zM2 6h1v1h-1zM9 6h5v1h-5zM2 7h1v1h-1zM13 7h1v1h-1zM2 8h2v1h-2zM7 8h2v1h-2zM10 8h1v1h-1zM13 8h1v1h-1zM4 9h1v1h-1zM6 9h1v1h-1zM9 9h1v1h-1zM11 9h1v1h-1zM13 9h1v1h-1zM5 10h1v1h-1zM12 10h1v1h-1zM3 11h1v1h-1zM7 11h1v1h-1zM2 12h1v1h-1zM4 12h1v1h-1zM6 12h1v1h-1zM8 12h1v1h-1zM10 12h1v1h-1zM12 12h2v1h-2zM2 13h1v1h-1zM5 13h1v1h-1zM9 13h1v1h-1zM11 13h1v1h-1zM13 13h1v1h-1zM2 14h1v1h-1zM13 14h1v1h-1zM2 15h12v1h-12z"/></svg></div><div class="bi" style="left:32px;top:164px"><svg viewBox="0 0 16 18" shape-rendering="crispEdges"><path fill="#a9a9a9" d="M2 2h9v1h-9zM2 3h1v1h-1zM9 3h1v1h-1zM11 3h1v1h-1zM2 4h1v1h-1zM9 4h1v1h-1zM12 4h1v1h-1zM2 5h1v1h-1zM9 5h1v1h-1zM13 5h1v1h-1zM2 6h1v1h-1zM9 6h5v1h-5zM2 7h1v1h-1zM13 7h1v1h-1zM2 8h2v1h-2zM7 8h2v1h-2zM10 8h1v1h-1zM13 8h1v1h-1zM4 9h1v1h-1zM6 9h1v1h-1zM9 9h1v1h-1zM11 9h1v1h-1zM13 9h1v1h-1zM5 10h1v1h-1zM12 10h1v1h-1zM3 11h1v1h-1zM7 11h1v1h-1zM2 12h1v1h-1zM4 12h1v1h-1zM6 12h1v1h-1zM8 12h1v1h-1zM10 12h1v1h-1zM12 12h2v1h-2zM2 13h1v1h-1zM5 13h1v1h-1zM9 13h1v1h-1zM11 13h1v1h-1zM13 13h1v1h-1zM2 14h1v1h-1zM13 14h1v1h-1zM2 15h12v1h-12z"/></svg></div><div class="bi" style="left:120px;top:164px"><svg viewBox="0 0 16 18" shape-rendering="crispEdges"><path fill="#a9a9a9" d="M2 2h9v1h-9zM2 3h1v1h-1zM9 3h1v1h-1zM11 3h1v1h-1zM2 4h1v1h-1zM9 4h1v1h-1zM12 4h1v1h-1zM2 5h1v1h-1zM9 5h1v1h-1zM13 5h1v1h-1zM2 6h1v1h-1zM9 6h5v1h-5zM2 7h1v1h-1zM13 7h1v1h-1zM2 8h2v1h-2zM7 8h2v1h-2zM10 8h1v1h-1zM13 8h1v1h-1zM4 9h1v1h-1zM6 9h1v1h-1zM9 9h1v1h-1zM11 9h1v1h-1zM13 9h1v1h-1zM5 10h1v1h-1zM12 10h1v1h-1zM3 11h1v1h-1zM7 11h1v1h-1zM2 12h1v1h-1zM4 12h1v1h-1zM6 12h1v1h-1zM8 12h1v1h-1zM10 12h1v1h-1zM12 12h2v1h-2zM2 13h1v1h-1zM5 13h1v1h-1zM9 13h1v1h-1zM11 13h1v1h-1zM13 13h1v1h-1zM2 14h1v1h-1zM13 14h1v1h-1zM2 15h12v1h-12z"/></svg></div><div class="bi" style="left:208px;top:164px"><svg viewBox="0 0 16 18" shape-rendering="crispEdges"><path fill="#a9a9a9" d="M2 2h9v1h-9zM2 3h1v1h-1zM9 3h1v1h-1zM11 3h1v1h-1zM2 4h1v1h-1zM9 4h1v1h-1zM12 4h1v1h-1zM2 5h1v1h-1zM9 5h1v1h-1zM13 5h1v1h-1zM2 6h1v1h-1zM9 6h5v1h-5zM2 7h1v1h-1zM13 7h1v1h-1zM2 8h2v1h-2zM7 8h2v1h-2zM10 8h1v1h-1zM13 8h1v1h-1zM4 9h1v1h-1zM6 9h1v1h-1zM9 9h1v1h-1zM11 9h1v1h-1zM13 9h1v1h-1zM5 10h1v1h-1zM12 10h1v1h-1zM3 11h1v1h-1zM7 11h1v1h-1zM2 12h1v1h-1zM4 12h1v1h-1zM6 12h1v1h-1zM8 12h1v1h-1zM10 12h1v1h-1zM12 12h2v1h-2zM2 13h1v1h-1zM5 13h1v1h-1zM9 13h1v1h-1zM11 13h1v1h-1zM13 13h1v1h-1zM2 14h1v1h-1zM13 14h1v1h-1zM2 15h12v1h-12z"/></svg></div><div class="bi" style="left:296px;top:164px"><svg viewBox="0 0 16 18" shape-rendering="crispEdges"><path fill="#a9a9a9" d="M2 2h9v1h-9zM2 3h1v1h-1zM9 3h1v1h-1zM11 3h1v1h-1zM2 4h1v1h-1zM9 4h1v1h-1zM12 4h1v1h-1zM2 5h1v1h-1zM9 5h1v1h-1zM13 5h1v1h-1zM2 6h1v1h-1zM9 6h5v1h-5zM2 7h1v1h-1zM13 7h1v1h-1zM2 8h2v1h-2zM7 8h2v1h-2zM10 8h1v1h-1zM13 8h1v1h-1zM4 9h1v1h-1zM6 9h1v1h-1zM9 9h1v1h-1zM11 9h1v1h-1zM13 9h1v1h-1zM5 10h1v1h-1zM12 10h1v1h-1zM3 11h1v1h-1zM7 11h1v1h-1zM2 12h1v1h-1zM4 12h1v1h-1zM6 12h1v1h-1zM8 12h1v1h-1zM10 12h1v1h-1zM12 12h2v1h-2zM2 13h1v1h-1zM5 13h1v1h-1zM9 13h1v1h-1zM11 13h1v1h-1zM13 13h1v1h-1zM2 14h1v1h-1zM13 14h1v1h-1zM2 15h12v1h-12z"/></svg></div><div class="bi" style="left:384px;top:164px"><svg viewBox="0 0 16 18" shape-rendering="crispEdges"><path fill="#a9a9a9" d="M2 2h9v1h-9zM2 3h1v1h-1zM9 3h1v1h-1zM11 3h1v1h-1zM2 4h1v1h-1zM9 4h1v1h-1zM12 4h1v1h-1zM2 5h1v1h-1zM9 5h1v1h-1zM13 5h1v1h-1zM2 6h1v1h-1zM9 6h5v1h-5zM2 7h1v1h-1zM13 7h1v1h-1zM2 8h2v1h-2zM7 8h2v1h-2zM10 8h1v1h-1zM13 8h1v1h-1zM4 9h1v1h-1zM6 9h1v1h-1zM9 9h1v1h-1zM11 9h1v1h-1zM13 9h1v1h-1zM5 10h1v1h-1zM12 10h1v1h-1zM3 11h1v1h-1zM7 11h1v1h-1zM2 12h1v1h-1zM4 12h1v1h-1zM6 12h1v1h-1zM8 12h1v1h-1zM10 12h1v1h-1zM12 12h2v1h-2zM2 13h1v1h-1zM5 13h1v1h-1zM9 13h1v1h-1zM11 13h1v1h-1zM13 13h1v1h-1zM2 14h1v1h-1zM13 14h1v1h-1zM2 15h12v1h-12z"/></svg></div><div class="bi" style="left:472px;top:164px"><svg viewBox="0 0 16 18" shape-rendering="crispEdges"><path fill="#a9a9a9" d="M2 2h9v1h-9zM2 3h1v1h-1zM9 3h1v1h-1zM11 3h1v1h-1zM2 4h1v1h-1zM9 4h1v1h-1zM12 4h1v1h-1zM2 5h1v1h-1zM9 5h1v1h-1zM13 5h1v1h-1zM2 6h1v1h-1zM9 6h5v1h-5zM2 7h1v1h-1zM13 7h1v1h-1zM2 8h2v1h-2zM7 8h2v1h-2zM10 8h1v1h-1zM13 8h1v1h-1zM4 9h1v1h-1zM6 9h1v1h-1zM9 9h1v1h-1zM11 9h1v1h-1zM13 9h1v1h-1zM5 10h1v1h-1zM12 10h1v1h-1zM3 11h1v1h-1zM7 11h1v1h-1zM2 12h1v1h-1zM4 12h1v1h-1zM6 12h1v1h-1zM8 12h1v1h-1zM10 12h1v1h-1zM12 12h2v1h-2zM2 13h1v1h-1zM5 13h1v1h-1zM9 13h1v1h-1zM11 13h1v1h-1zM13 13h1v1h-1zM2 14h1v1h-1zM13 14h1v1h-1zM2 15h12v1h-12z"/></svg></div><div class="bi" style="left:560px;top:164px"><svg viewBox="0 0 16 18" shape-rendering="crispEdges"><path fill="#a9a9a9" d="M2 2h9v1h-9zM2 3h1v1h-1zM9 3h1v1h-1zM11 3h1v1h-1zM2 4h1v1h-1zM9 4h1v1h-1zM12 4h1v1h-1zM2 5h1v1h-1zM9 5h1v1h-1zM13 5h1v1h-1zM2 6h1v1h-1zM9 6h5v1h-5zM2 7h1v1h-1zM13 7h1v1h-1zM2 8h2v1h-2zM7 8h2v1h-2zM10 8h1v1h-1zM13 8h1v1h-1zM4 9h1v1h-1zM6 9h1v1h-1zM9 9h1v1h-1zM11 9h1v1h-1zM13 9h1v1h-1zM5 10h1v1h-1zM12 10h1v1h-1zM3 11h1v1h-1zM7 11h1v1h-1zM2 12h1v1h-1zM4 12h1v1h-1zM6 12h1v1h-1zM8 12h1v1h-1zM10 12h1v1h-1zM12 12h2v1h-2zM2 13h1v1h-1zM5 13h1v1h-1zM9 13h1v1h-1zM11 13h1v1h-1zM13 13h1v1h-1zM2 14h1v1h-1zM13 14h1v1h-1zM2 15h12v1h-12z"/></svg></div><div class="bi" style="left:32px;top:202px"><svg viewBox="0 0 16 18" shape-rendering="crispEdges"><path fill="#a9a9a9" d="M2 2h9v1h-9zM2 3h1v1h-1zM9 3h1v1h-1zM11 3h1v1h-1zM2 4h1v1h-1zM9 4h1v1h-1zM12 4h1v1h-1zM2 5h1v1h-1zM9 5h1v1h-1zM13 5h1v1h-1zM2 6h1v1h-1zM9 6h5v1h-5zM2 7h1v1h-1zM13 7h1v1h-1zM2 8h2v1h-2zM7 8h2v1h-2zM10 8h1v1h-1zM13 8h1v1h-1zM4 9h1v1h-1zM6 9h1v1h-1zM9 9h1v1h-1zM11 9h1v1h-1zM13 9h1v1h-1zM5 10h1v1h-1zM12 10h1v1h-1zM3 11h1v1h-1zM7 11h1v1h-1zM2 12h1v1h-1zM4 12h1v1h-1zM6 12h1v1h-1zM8 12h1v1h-1zM10 12h1v1h-1zM12 12h2v1h-2zM2 13h1v1h-1zM5 13h1v1h-1zM9 13h1v1h-1zM11 13h1v1h-1zM13 13h1v1h-1zM2 14h1v1h-1zM13 14h1v1h-1zM2 15h12v1h-12z"/></svg></div><div class="bi" style="left:120px;top:202px"><svg viewBox="0 0 16 18" shape-rendering="crispEdges"><path fill="#a9a9a9" d="M2 2h9v1h-9zM2 3h1v1h-1zM9 3h1v1h-1zM11 3h1v1h-1zM2 4h1v1h-1zM9 4h1v1h-1zM12 4h1v1h-1zM2 5h1v1h-1zM9 5h1v1h-1zM13 5h1v1h-1zM2 6h1v1h-1zM9 6h5v1h-5zM2 7h1v1h-1zM13 7h1v1h-1zM2 8h2v1h-2zM7 8h2v1h-2zM10 8h1v1h-1zM13 8h1v1h-1zM4 9h1v1h-1zM6 9h1v1h-1zM9 9h1v1h-1zM11 9h1v1h-1zM13 9h1v1h-1zM5 10h1v1h-1zM12 10h1v1h-1zM3 11h1v1h-1zM7 11h1v1h-1zM2 12h1v1h-1zM4 12h1v1h-1zM6 12h1v1h-1zM8 12h1v1h-1zM10 12h1v1h-1zM12 12h2v1h-2zM2 13h1v1h-1zM5 13h1v1h-1zM9 13h1v1h-1zM11 13h1v1h-1zM13 13h1v1h-1zM2 14h1v1h-1zM13 14h1v1h-1zM2 15h12v1h-12z"/></svg></div><div class="bi" style="left:208px;top:202px"><svg viewBox="0 0 16 18" shape-rendering="crispEdges"><path fill="#a9a9a9" d="M2 2h9v1h-9zM2 3h1v1h-1zM9 3h1v1h-1zM11 3h1v1h-1zM2 4h1v1h-1zM9 4h1v1h-1zM12 4h1v1h-1zM2 5h1v1h-1zM9 5h1v1h-1zM13 5h1v1h-1zM2 6h1v1h-1zM9 6h5v1h-5zM2 7h1v1h-1zM13 7h1v1h-1zM2 8h2v1h-2zM7 8h2v1h-2zM10 8h1v1h-1zM13 8h1v1h-1zM4 9h1v1h-1zM6 9h1v1h-1zM9 9h1v1h-1zM11 9h1v1h-1zM13 9h1v1h-1zM5 10h1v1h-1zM12 10h1v1h-1zM3 11h1v1h-1zM7 11h1v1h-1zM2 12h1v1h-1zM4 12h1v1h-1zM6 12h1v1h-1zM8 12h1v1h-1zM10 12h1v1h-1zM12 12h2v1h-2zM2 13h1v1h-1zM5 13h1v1h-1zM9 13h1v1h-1zM11 13h1v1h-1zM13 13h1v1h-1zM2 14h1v1h-1zM13 14h1v1h-1zM2 15h12v1h-12z"/></svg></div><div class="bi" style="left:296px;top:202px"><svg viewBox="0 0 16 18" shape-rendering="crispEdges"><path fill="#a9a9a9" d="M2 2h9v1h-9zM2 3h1v1h-1zM9 3h1v1h-1zM11 3h1v1h-1zM2 4h1v1h-1zM9 4h1v1h-1zM12 4h1v1h-1zM2 5h1v1h-1zM9 5h1v1h-1zM13 5h1v1h-1zM2 6h1v1h-1zM9 6h5v1h-5zM2 7h1v1h-1zM13 7h1v1h-1zM2 8h2v1h-2zM7 8h2v1h-2zM10 8h1v1h-1zM13 8h1v1h-1zM4 9h1v1h-1zM6 9h1v1h-1zM9 9h1v1h-1zM11 9h1v1h-1zM13 9h1v1h-1zM5 10h1v1h-1zM12 10h1v1h-1zM3 11h1v1h-1zM7 11h1v1h-1zM2 12h1v1h-1zM4 12h1v1h-1zM6 12h1v1h-1zM8 12h1v1h-1zM10 12h1v1h-1zM12 12h2v1h-2zM2 13h1v1h-1zM5 13h1v1h-1zM9 13h1v1h-1zM11 13h1v1h-1zM13 13h1v1h-1zM2 14h1v1h-1zM13 14h1v1h-1zM2 15h12v1h-12z"/></svg></div><div class="bi" style="left:384px;top:202px"><svg viewBox="0 0 16 18" shape-rendering="crispEdges"><path fill="#a9a9a9" d="M2 2h9v1h-9zM2 3h1v1h-1zM9 3h1v1h-1zM11 3h1v1h-1zM2 4h1v1h-1zM9 4h1v1h-1zM12 4h1v1h-1zM2 5h1v1h-1zM9 5h1v1h-1zM13 5h1v1h-1zM2 6h1v1h-1zM9 6h5v1h-5zM2 7h1v1h-1zM13 7h1v1h-1zM2 8h2v1h-2zM7 8h2v1h-2zM10 8h1v1h-1zM13 8h1v1h-1zM4 9h1v1h-1zM6 9h1v1h-1zM9 9h1v1h-1zM11 9h1v1h-1zM13 9h1v1h-1zM5 10h1v1h-1zM12 10h1v1h-1zM3 11h1v1h-1zM7 11h1v1h-1zM2 12h1v1h-1zM4 12h1v1h-1zM6 12h1v1h-1zM8 12h1v1h-1zM10 12h1v1h-1zM12 12h2v1h-2zM2 13h1v1h-1zM5 13h1v1h-1zM9 13h1v1h-1zM11 13h1v1h-1zM13 13h1v1h-1zM2 14h1v1h-1zM13 14h1v1h-1zM2 15h12v1h-12z"/></svg></div></div>

<svg class="abs" style="left:426px;top:707px" width="7" height="7" viewBox="0 0 7 7"><path d="M0 0L7 3.5L0 7z"/></svg><div class="tree" style="top:703px">Moyamba</div>
<svg class="abs" style="left:426px;top:724px" width="7" height="7" viewBox="0 0 7 7"><path d="M0 0L7 3.5L0 7z"/></svg><div class="tree" style="top:720px">Port Loko</div>
<svg class="abs" style="left:426px;top:741px" width="7" height="7" viewBox="0 0 7 7"><path d="M0 0L7 3.5L0 7z"/></svg><div class="tree" style="top:737px">Pujehun</div>
<svg class="abs" style="left:426px;top:758px" width="7" height="7" viewBox="0 0 7 7"><path d="M0 0L7 3.5L0 7z"/></svg><div class="tree" style="top:754px">Tonkolili</div>
<svg class="abs" style="left:426px;top:775px" width="7" height="7" viewBox="0 0 7 7"><path d="M0 0L7 3.5L0 7z"/></svg><div class="tree" style="top:771px">Western Area</div>
<div class="btn" style="left:390px;background:#ff9800;color:#fff;box-shadow:0 1px 4px rgba(0,0,0,.2)"><span>SAVE</span></div>
<div class="btn" style="left:544px;background:#fff;color:#2a2a2a;box-shadow:0 1px 4px rgba(0,0,0,.2)"><span>CANCEL</span></div>
</body></html>
